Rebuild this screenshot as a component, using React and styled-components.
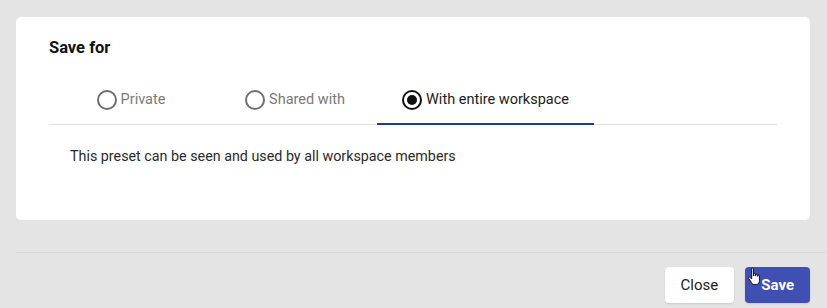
import React from "react";
import styled, { createGlobalStyle } from "styled-components";

const Global = createGlobalStyle`
  html, body { margin: 0; padding: 0; background: #e4e4e4; }
  body { font-family: Roboto, "Liberation Sans", Arial, sans-serif; }
`;

const Page = styled.div`
  width: 827px;
  height: 308px;
  overflow: hidden;
  background: #e4e4e4;
  display: flex;
  flex-direction: column;
  padding: 17px 0 0 16px;
  box-sizing: border-box;
`;

const Card = styled.div`
  width: 794px;
  height: 203px;
  box-sizing: border-box;
  background: #fff;
  border-radius: 5px;
  padding: 22px 32px 0 33px;
`;

const Title = styled.div`
  font-size: 16.5px;
  font-weight: 700;
  color: #111;
  line-height: 18px;
`;

const TabBar = styled.div`
  margin-top: 19px;
  display: flex;
  border-bottom: 1px solid #e2e2e2;
  height: 48px;
`;

const Tab = styled.div`
  min-width: 164px;
  box-sizing: border-box;
  padding: 0 25px;
  display: flex;
  align-items: center;
  justify-content: center;
  gap: 4px;
  font-size: 14.5px;
  color: ${(p) => (p.$active ? "#1c1c1c" : "#7a7a7a")};
  margin-bottom: -1px;
  border-bottom: 2px solid ${(p) => (p.$active ? "#1d3a9b" : "transparent")};
`;

const Radio = styled.span`
  width: 20px;
  height: 20px;
  box-sizing: border-box;
  border-radius: 50%;
  border: 2px solid ${(p) => (p.$checked ? "#111" : "#6f6f6f")};
  display: inline-flex;
  align-items: center;
  justify-content: center;
  flex: none;
  &::after {
    content: "";
    width: 10px;
    height: 10px;
    border-radius: 50%;
    background: #111;
    display: ${(p) => (p.$checked ? "block" : "none")};
  }
`;

const Panel = styled.div`
  padding: 23px 0 0 21px;
  font-size: 14.3px;
  color: #2a2a2a;
  line-height: 16px;
`;

const Footer = styled.div`
  margin-top: 32px;
  border-top: 1px solid #d6d6d6;
  display: flex;
  justify-content: flex-end;
  gap: 11px;
  padding: 14px 17px 0 0;
`;

const Button = styled.button`
  height: 36px;
  padding: 0 16px;
  border-radius: 4px;
  border: none;
  font-family: Roboto, "Liberation Sans", Arial, sans-serif;
  font-size: 15px;
  font-weight: ${(p) => (p.$primary ? 700 : 400)};
  background: ${(p) => (p.$primary ? "#3f4fb3" : "#fff")};
  color: ${(p) => (p.$primary ? "#fff" : "#1c1c1c")};
  box-shadow: 0 1px 2px rgba(0, 0, 0, 0.12);
  position: relative;
  cursor: pointer;
`;

const Cursor = styled.svg`
  position: absolute;
  left: 2px;
  top: 0px;
  width: 16px;
  height: 20px;
`;

export default function App() {
  return (
    <>
      <Global />
      <Page>
        <Card>
          <Title>Save for</Title>
          <TabBar>
            <Tab>
              <Radio />
              Private
            </Tab>
            <Tab>
              <Radio />
              Shared with
            </Tab>
            <Tab $active>
              <Radio $checked />
              With entire workspace
            </Tab>
          </TabBar>
          <Panel>This preset can be seen and used by all workspace members</Panel>
        </Card>
        <Footer>
          <Button>Close</Button>
          <Button $primary>
            <Cursor viewBox="0 0 14 18">
              <path
                d="M4 1.5c0-.8 1.6-.8 1.6 0V8h.3V6.3c0-.8 1.5-.8 1.5 0V8h.3V7c0-.8 1.5-.8 1.5 0v1.3h.3v-.5c0-.8 1.5-.8 1.5 0v4.4c0 2-1 3.5-2.7 3.5H6.2c-1 0-1.7-.6-2.3-1.5L1.3 10.2c-.5-.8.6-1.6 1.3-.9L4 10.8z"
                fill="#fff"
                stroke="#111"
                strokeWidth="0.9"
                strokeLinejoin="round"
              />
            </Cursor>
            Save
          </Button>
        </Footer>
      </Page>
    </>
  );
}
